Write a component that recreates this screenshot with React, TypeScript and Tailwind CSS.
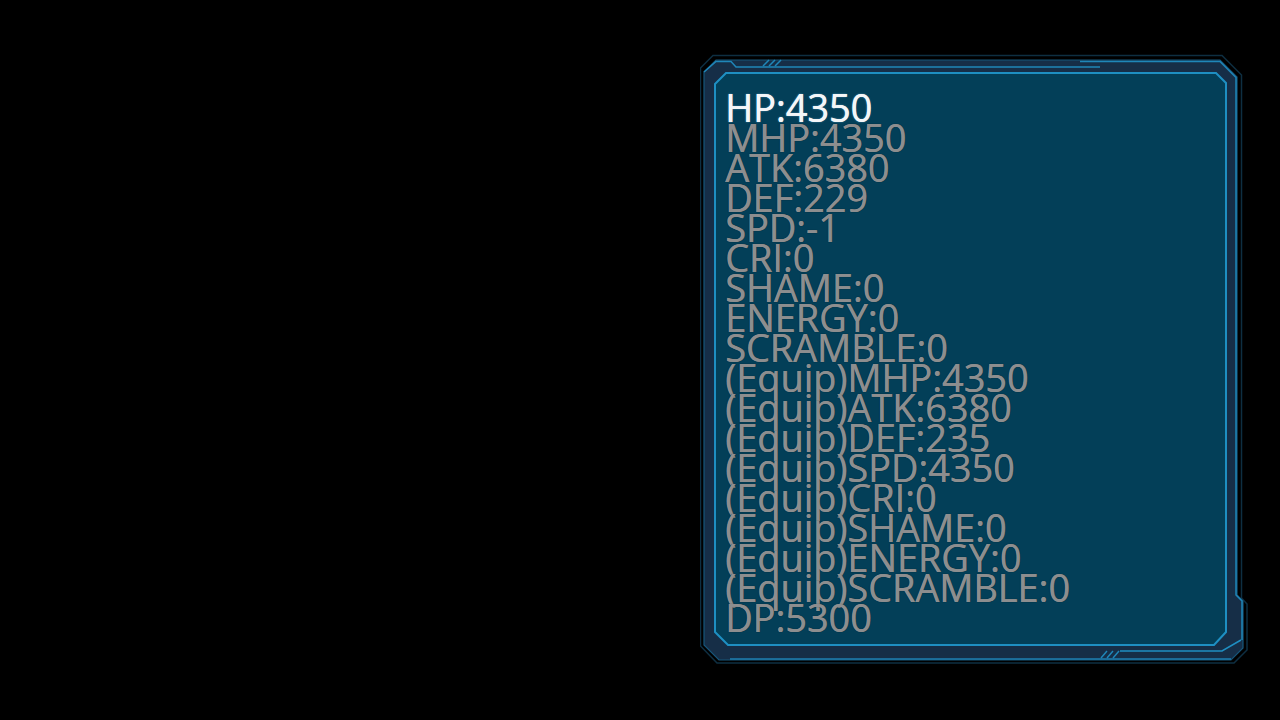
const stats = [
  "MHP:4350",
  "ATK:6380",
  "DEF:229",
  "SPD:-1",
  "CRI:0",
  "SHAME:0",
  "ENERGY:0",
  "SCRAMBLE:0",
  "(Equip)MHP:4350",
  "(Equip)ATK:6380",
  "(Equip)DEF:235",
  "(Equip)SPD:4350",
  "(Equip)CRI:0",
  "(Equip)SHAME:0",
  "(Equip)ENERGY:0",
  "(Equip)SCRAMBLE:0",
  "DP:5300",
]

const Frame = () => (
  <svg className="absolute inset-0" width="548" height="612" viewBox="700 54 548 612">
    {/* outer thin rim */}
    <path
      d="M700.5 68 L713 55.5 L1222 55.5 L1241.5 75 L1241.5 598 L1247 604 L1247 650 L1234 663 L717 663 L700.5 646 Z"
      fill="none"
      stroke="#0e2f42"
      strokeWidth="1.5"
    />
    {/* dark band */}
    <path
      d="M704 72 L716 60 L1220 60 L1237 77 L1237 595 L1243 601 L1243 648 L1231 660 L719 660 L704 645 Z"
      fill="#162e47"
      stroke="#17567a"
      strokeWidth="1.2"
    />
    {/* bright edge accents */}
    <path d="M704 72 L716 61.5 L731 61.5 L736 67 L1100 67" fill="none" stroke="#1f86b8" strokeWidth="1.5" />
    <path d="M1080 61.5 L1220 61.5 L1236 77.5 L1236 595 L1242 601 L1242 640" fill="none" stroke="#1f86b8" strokeWidth="1.5" />
    <path d="M730 659 L1231 659" fill="none" stroke="#1e7fb0" strokeWidth="1.5" />
    <path d="M1120 651 L1222 651 L1241 640" fill="none" stroke="#1f8fc2" strokeWidth="1.5" />
    {/* slashes */}
    <path d="M763 66 L769 60 M769 66 L775 60 M775 66 L781 60" stroke="#1f86b8" strokeWidth="1.5" />
    <path d="M1101 658 L1107 651 M1107 658 L1113 651 M1113 658 L1119 651" stroke="#1f86b8" strokeWidth="1.5" />
    {/* inner panel */}
    <path
      d="M715 84 L726 73 L1216 73 L1226 83 L1226 632 L1214 645 L728 645 L715 632 Z"
      fill="#033f58"
      stroke="#1e8fc2"
      strokeWidth="2"
    />
  </svg>
)

const App = () => {
  return (
    <div className="w-[1280px] h-[720px] bg-black overflow-hidden flex items-start">
      <div className="relative ml-[700px] mt-[54px] w-[548px] h-[612px]">
        <Frame />
        <div className="relative pl-[25px] pt-[38px] font-['Open_Sans',Arial,sans-serif] text-[38px] leading-[30px] tracking-[-0.1px]">
          <div className="text-[#f4f6f8] [text-shadow:0.4px_0_0_#f4f6f8,0_0_2px_rgba(160,220,255,0.5)]">HP:4350</div>
          {stats.map((s) => (
            <div key={s} className="text-[#8d8e8f] [text-shadow:0.4px_0_0_#8d8e8f,0_0_1px_rgba(0,0,0,0.7)]">
              {s}
            </div>
          ))}
        </div>
      </div>
    </div>
  )
}

export default App
